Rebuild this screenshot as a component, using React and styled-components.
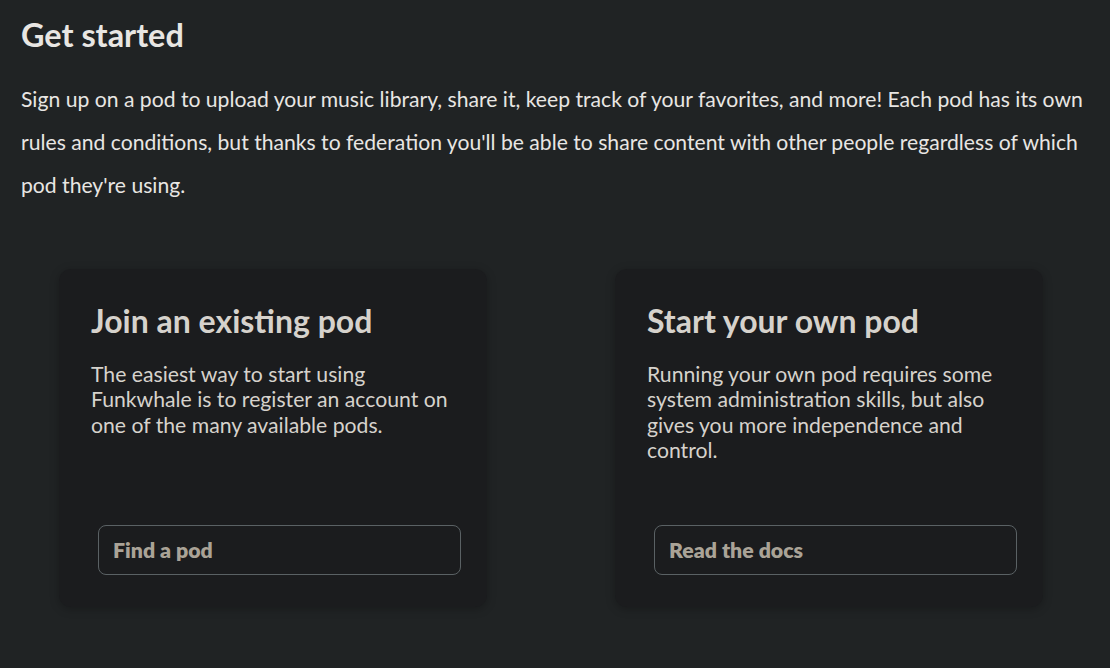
import React from "react";
import styled, { createGlobalStyle } from "styled-components";

const Global = createGlobalStyle`
  html, body { margin: 0; padding: 0; background: #202324; }
  body { font-family: Lato, "Noto Sans", sans-serif; color: #e8e6e3; }
  * { box-sizing: border-box; }
`;

const Page = styled.main`
  width: 1110px;
  height: 668px;
  padding: 14px 21px 0 21px;
  background: #202324;
  overflow: hidden;
`;

const Title = styled.h1`
  margin: 0;
  font-size: 32.4px;
  font-weight: 700;
  line-height: 42px;
  color: #e8e6e3;
`;

const Intro = styled.p`
  margin: 22px 0 0 0;
  font-size: 21.15px;
  line-height: 43px;
  color: #e8e6e3;
`;

const Cards = styled.div`
  display: grid;
  grid-template-columns: 428px 428px;
  column-gap: 128px;
  margin: 62px 0 0 38px;
`;

const Card = styled.section`
  height: 338px;
  background: #1b1c1e;
  border-radius: 12px;
  box-shadow: 0 2px 10px rgba(0, 0, 0, 0.25);
  padding: 32px 26px 32px 32px;
  display: flex;
  flex-direction: column;
`;

const CardTitle = styled.h2`
  margin: 0;
  font-size: 32px;
  font-weight: 700;
  line-height: 40px;
  color: #d6d2cc;
`;

const CardText = styled.p`
  margin: 21px 0 0 0;
  font-size: 21.2px;
  line-height: 25.3px;
  color: #d6d2cc;
`;

const Button = styled.a`
  margin-top: auto;
  margin-left: 7px;
  height: 50px;
  display: flex;
  align-items: center;
  padding: 0 14px;
  border: 1.5px solid #5a6164;
  border-radius: 8px;
  font-size: 21.3px;
  font-weight: 800;
  color: #aaa397;
  text-decoration: none;
  cursor: pointer;
`;

export default function App() {
  return (
    <>
      <Global />
      <Page>
        <Title>Get started</Title>
        <Intro>
          Sign up on a pod to upload your music library, share it, keep track of your favorites, and more! Each pod has its own rules and conditions, but thanks to federation you'll be able to share content with other people regardless of which pod they're using.
        </Intro>
        <Cards>
          <Card>
            <CardTitle>Join an existing pod</CardTitle>
            <CardText>
              The easiest way to start using Funkwhale is to register an account on one of the many available pods.
            </CardText>
            <Button>Find a pod</Button>
          </Card>
          <Card>
            <CardTitle>Start your own pod</CardTitle>
            <CardText>
              Running your own pod requires some system administration skills, but also gives you more independence and control.
            </CardText>
            <Button>Read the docs</Button>
          </Card>
        </Cards>
      </Page>
    </>
  );
}
